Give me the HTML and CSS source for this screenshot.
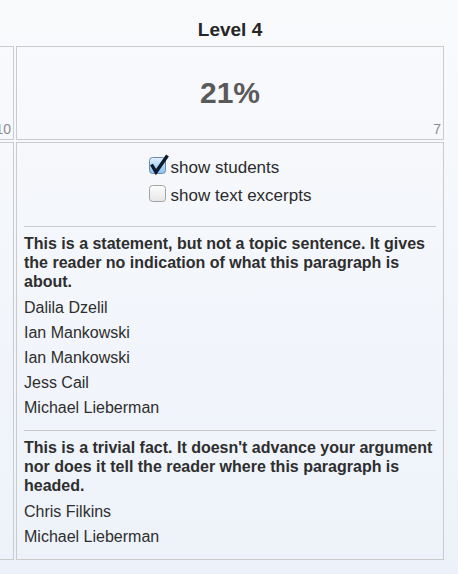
FILE: index.html
```html
<!DOCTYPE html>
<html>
<head>
<meta charset="utf-8">
<link rel="stylesheet" href="styles.css">
</head>
<body>
<div class="board">
  <div class="head"></div>
  <div class="head">Level 4</div>

  <div class="summary">
    <div class="pct"></div>
    <div class="count">10</div>
  </div>
  <div class="summary">
    <div class="pct">21%</div>
    <div class="count">7</div>
  </div>

  <div class="details"></div>
  <div class="details">
    <div class="options">
      <label class="opt">
        <svg class="cb" width="17" height="17" viewBox="0 0 17 17">
          <defs>
            <linearGradient id="gOn" x1="0" y1="0" x2="0" y2="1">
              <stop offset="0" stop-color="#e4f1fd"/>
              <stop offset="0.5" stop-color="#b4d7f6"/>
              <stop offset="1" stop-color="#8cc2f1"/>
            </linearGradient>
          </defs>
          <rect x="0.5" y="0.5" width="16" height="16" rx="3" fill="url(#gOn)" stroke="#6f8aa8"/>
          <path d="M2.5 7.5 L7 15 L18.5 -1.5" fill="none" stroke="#0d1a30" stroke-width="3.4" stroke-linejoin="miter" stroke-linecap="butt"/>
        </svg>
        <span>show students</span>
      </label>
      <label class="opt">
        <svg class="cb" width="17" height="17" viewBox="0 0 17 17">
          <defs>
            <linearGradient id="gOff" x1="0" y1="0" x2="0" y2="1">
              <stop offset="0" stop-color="#fdfdfd"/>
              <stop offset="1" stop-color="#e6e6e6"/>
            </linearGradient>
          </defs>
          <rect x="0.5" y="0.5" width="16" height="16" rx="3" fill="url(#gOff)" stroke="#a3a3a3"/>
        </svg>
        <span>show text excerpts</span>
      </label>
    </div>

    <div class="section">
      <div class="comment">This is a statement, but not a topic sentence. It gives the reader no indication of what this paragraph is about.</div>
      <div class="name">Dalila Dzelil</div>
      <div class="name">Ian Mankowski</div>
      <div class="name">Ian Mankowski</div>
      <div class="name">Jess Cail</div>
      <div class="name">Michael Lieberman</div>
    </div>

    <div class="section">
      <div class="comment">This is a trivial fact. It doesn't advance your argument nor does it tell the reader where this paragraph is headed.</div>
      <div class="name">Chris Filkins</div>
      <div class="name">Michael Lieberman</div>
    </div>
  </div>
</div>
</body>
</html>
```

FILE: styles.css
```css
html {
  min-height: 100%;
  background: linear-gradient(#f9fafc, #edf2fa);
}

body {
  margin: 0;
  font-family: "Liberation Sans", Arial, Helvetica, sans-serif;
  color: #2e2e2e;
}

.board {
  display: grid;
  grid-template-columns: 200px 428px;
  column-gap: 2px;
  row-gap: 2px;
  margin-left: -186px;
  width: 630px;
}

.head {
  height: 44px;
  box-sizing: border-box;
  padding-top: 19px;
  font-size: 19px;
  line-height: 22px;
  font-weight: bold;
  text-align: center;
  color: #262626;
}

.summary {
  border: 1px solid #cbcbcb;
  height: 94px;
  box-sizing: border-box;
  padding: 29px 2px 2px 2px;
  display: flex;
  flex-direction: column;
}

.pct {
  font-size: 30px;
  line-height: 34px;
  height: 34px;
  font-weight: bold;
  text-align: center;
  color: #5a5a5a;
}

.count {
  margin-top: 11px;
  font-size: 14px;
  line-height: 16px;
  text-align: right;
  color: #8c8c8c;
}

.details {
  border: 1px solid #cbcbcb;
  padding: 11px 7px 10px 7px;
}

.options {
  width: fit-content;
  margin: 0 auto;
  padding-bottom: 6px;
  display: flex;
  flex-direction: column;
}

.opt {
  display: flex;
  align-items: flex-start;
  height: 28px;
  font-size: 17px;
  line-height: 28px;
  color: #2b2b2b;
}

.cb {
  flex: none;
  margin-top: 3px;
  margin-right: 5px;
  overflow: visible;
}

.section {
  margin-top: 10px;
  border-top: 1px solid #cbcbcb;
  padding-top: 7px;
}

.comment {
  font-size: 16px;
  line-height: 19px;
  font-weight: bold;
  color: #2e2e2e;
  margin-bottom: 4px;
}

.name {
  font-size: 16px;
  line-height: 25px;
  color: #2e2e2e;
}
```
